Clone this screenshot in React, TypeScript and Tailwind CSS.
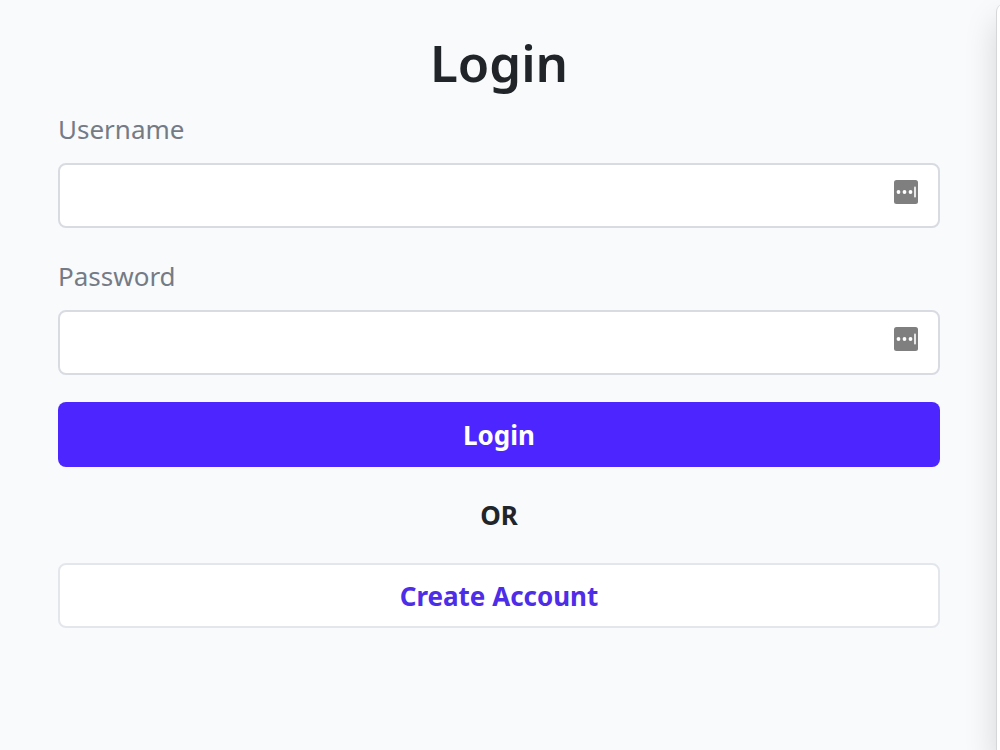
import React, { useState } from 'react';

type FieldProps = {
  id: string;
  label: string;
  type: 'text' | 'password';
  value: string;
  onChange: (value: string) => void;
};

const AutofillIcon: React.FC = () => (
  <svg viewBox="0 0 24 24" className="size-6" aria-hidden="true">
    <rect width="24" height="24" rx="2.5" fill="#7f7f7f" />
    <circle cx="4.5" cy="12" r="1.9" fill="#fff" />
    <circle cx="10.5" cy="12" r="1.9" fill="#fff" />
    <circle cx="16.5" cy="12" r="1.9" fill="#fff" />
    <rect x="20" y="6.5" width="2" height="11" rx="0.8" fill="#e8e8e8" />
  </svg>
);

const Field: React.FC<FieldProps> = ({ id, label, type, value, onChange }) => (
  <div className="flex flex-col gap-4">
    <label htmlFor={id} className="text-[26px] leading-9 text-[#757b85]">{label}</label>
    <div className="relative">
      <input
        id={id}
        type={type}
        value={value}
        onChange={e => onChange(e.target.value)}
        className="block h-[65px] w-full rounded-lg border-2 border-[#d8dbe1] bg-white pr-16 pl-5 text-[26px] text-[#212529] outline-none focus:border-[#4d25ff]"
      />
      {/* Password manager badge sits over the input */}
      <span className="pointer-events-none absolute top-[17px] right-[22px]">
        <AutofillIcon />
      </span>
    </div>
  </div>
);

const App: React.FC = () => {
  const [username, setUsername] = useState('');
  const [password, setPassword] = useState('');

  return (
    <div className="flex min-h-screen overflow-hidden bg-[#f8fafc] font-['Noto_Sans',sans-serif] text-[#212529]">
      <main className="flex-1 pt-[30px] pr-14 pb-12 pl-[58px]">
        <h1 className="text-center text-[51px] leading-[64px] font-semibold">Login</h1>
        <form className="mt-[17px] flex flex-col" onSubmit={e => e.preventDefault()}>
          <div className="flex flex-col gap-[30px]">
            <Field id="username" label="Username" type="text" value={username} onChange={setUsername} />
            <Field id="password" label="Password" type="password" value={password} onChange={setPassword} />
          </div>
          <button type="submit" className="mt-[27px] h-[65px] rounded-lg bg-[#4d25ff] text-[26px] leading-9 font-bold text-white">
            Login
          </button>
          <p className="my-[30px] text-center text-[26px] leading-9 font-bold">OR</p>
          <button type="button" className="h-[65px] rounded-lg border-2 border-[#e3e6eb] bg-white text-[26px] leading-9 font-bold text-[#4d2de8]">
            Create Account
          </button>
        </form>
      </main>
      {/* Next card, only its left edge is in view */}
      <div className="mt-1 w-1">
        <aside className="h-full w-96 rounded-tl-lg border-l border-[#d5d7d9] bg-white shadow-[0_16px_32px_rgba(0,0,0,0.15)]" />
      </div>
    </div>
  );
};

export default App;
